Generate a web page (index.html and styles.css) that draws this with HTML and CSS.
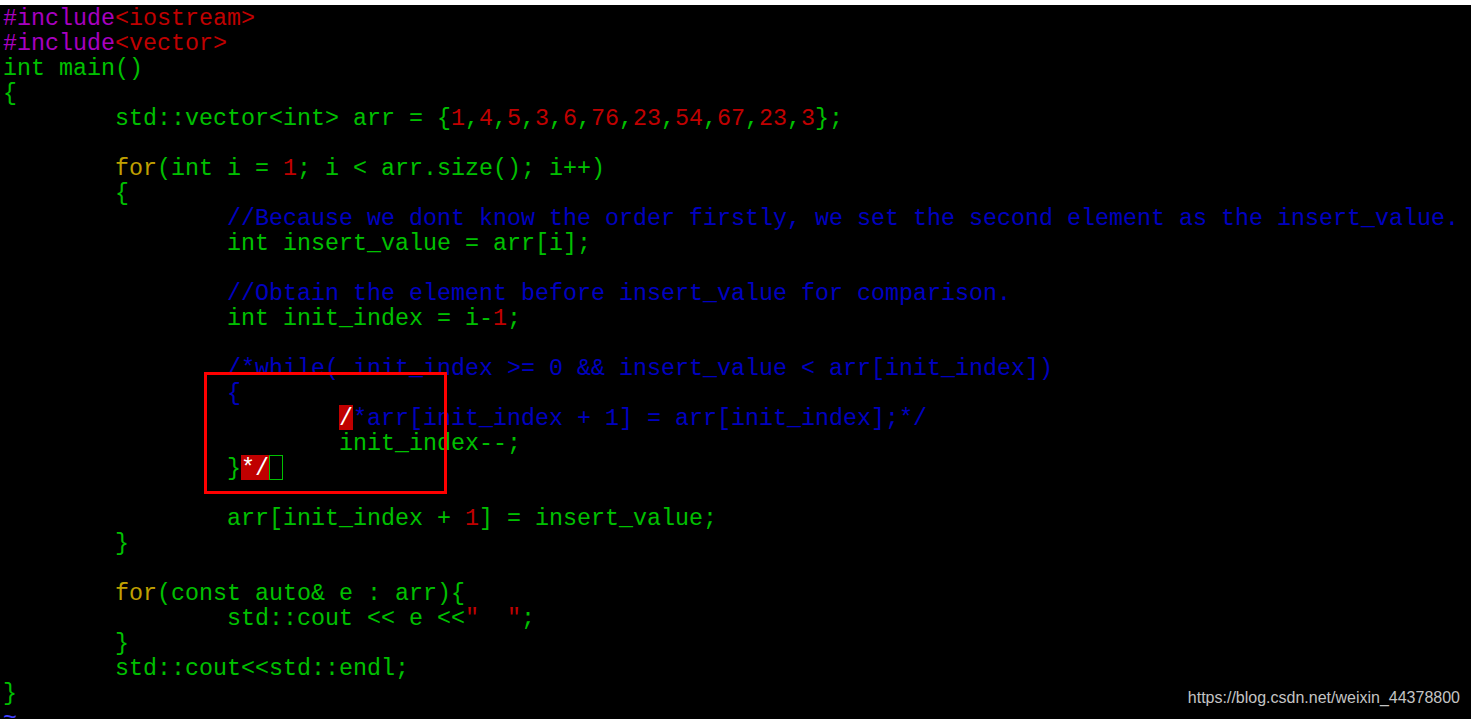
FILE: index.html
```html
<!DOCTYPE html>
<html>
<head>
<meta charset="utf-8">
<link rel="stylesheet" href="styles.css">
</head>
<body>
<div class="topbar"></div>
<div class="editor">
<div class="ln"><span class="pp">#include</span><span class="str">&lt;iostream&gt;</span></div>
<div class="ln"><span class="pp">#include</span><span class="str">&lt;vector&gt;</span></div>
<div class="ln">int main()</div>
<div class="ln">{</div>
<div class="ln">        std::vector&lt;int&gt; arr = {<span class="num">1</span>,<span class="num">4</span>,<span class="num">5</span>,<span class="num">3</span>,<span class="num">6</span>,<span class="num">76</span>,<span class="num">23</span>,<span class="num">54</span>,<span class="num">67</span>,<span class="num">23</span>,<span class="num">3</span>};</div>
<div class="ln"> </div>
<div class="ln">        <span class="kw">for</span>(int i = <span class="num">1</span>; i &lt; arr.size(); i++)</div>
<div class="ln">        {</div>
<div class="ln">                <span class="cm">//Because we dont know the order firstly, we set the second element as the insert_value.</span></div>
<div class="ln">                int insert_value = arr[i];</div>
<div class="ln"> </div>
<div class="ln">                <span class="cm">//Obtain the element before insert_value for comparison.</span></div>
<div class="ln">                int init_index = i-<span class="num">1</span>;</div>
<div class="ln"> </div>
<div class="ln">                <span class="cm">/*while( init_index &gt;= 0 &amp;&amp; insert_value &lt; arr[init_index])</span></div>
<div class="ln">                <span class="cm">{</span></div>
<div class="ln">                        <span class="err">/</span><span class="cm">*arr[init_index + 1] = arr[init_index];*/</span></div>
<div class="ln">                        init_index--;</div>
<div class="ln">                }<span class="err">*/</span><span class="cursor"> </span></div>
<div class="ln"> </div>
<div class="ln">                arr[init_index + <span class="num">1</span>] = insert_value;</div>
<div class="ln">        }</div>
<div class="ln"> </div>
<div class="ln">        <span class="kw">for</span>(const auto&amp; e : arr){</div>
<div class="ln">                std::cout &lt;&lt; e &lt;&lt;<span class="str">"  "</span>;</div>
<div class="ln">        }</div>
<div class="ln">        std::cout&lt;&lt;std::endl;</div>
<div class="ln">}</div>
<div class="ln tilde">~</div>
</div>
<div class="mark"></div>
<div class="watermark">https://blog.csdn.net/weixin_44378800</div>
</body>
</html>
```
FILE: styles.css
```css
html, body {
  margin: 0;
  padding: 0;
  background: #000;
  overflow: hidden;
  height: 719px;
}
.topbar {
  height: 5px;
  background: #fff;
}
.editor {
  padding-left: 3px;
  font-family: "Liberation Mono", "Courier New", monospace;
  font-size: 23.333px;
  line-height: 25px;
  color: #00c000;
}
.ln {
  height: 25px;
  box-sizing: border-box;
  padding-top: 2px;
  white-space: pre;
}
.pp { color: #a800c0; }
.str { color: #c00000; }
.num { color: #c00000; }
.kw { color: #c0a000; }
.cm { color: #0000c0; }
.err {
  background: #c00000;
  color: #fff;
  display: inline-block;
  height: 25px;
  vertical-align: top;
  margin-top: -2px;
  padding-top: 2px;
  box-sizing: border-box;
}
.cursor {
  display: inline-block;
  width: 14px;
  height: 25px;
  box-sizing: border-box;
  border: 1px solid #00c000;
  vertical-align: top;
  margin-top: -2px;
}
.tilde { color: #4040ff; }
.mark {
  position: absolute;
  left: 204px;
  top: 372px;
  width: 243px;
  height: 122px;
  box-sizing: border-box;
  border: 3px solid #ff0000;
}
.watermark {
  position: absolute;
  right: 11px;
  top: 688px;
  font-family: "Liberation Sans", Arial, sans-serif;
  font-size: 16px;
  line-height: 20px;
  color: #c4c4c4;
}
```
